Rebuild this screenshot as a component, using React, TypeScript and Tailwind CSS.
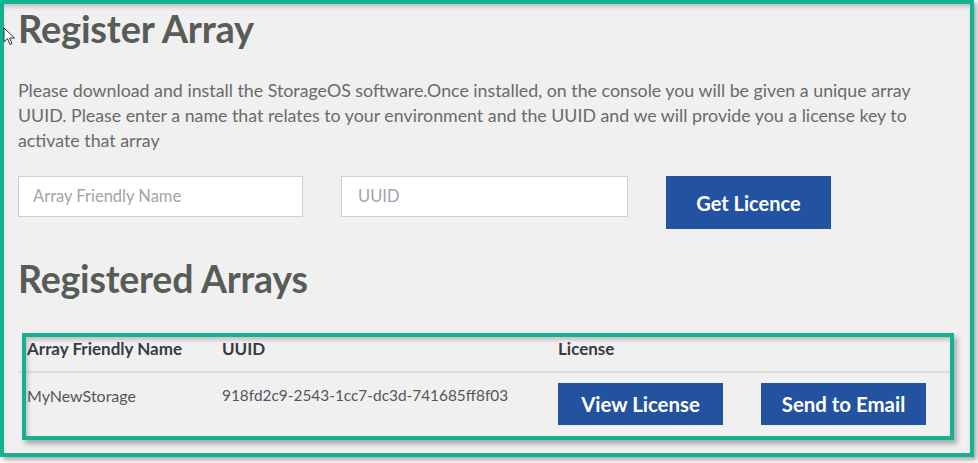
import React from "react";

const font = { fontFamily: "Lato, 'Open Sans', sans-serif" };

export default function App() {
  return (
    <div className="relative w-[978px] h-[463px] bg-white overflow-hidden" style={font}>
      <div className="w-[974px] h-[457px] box-border border-4 border-[#14b08f] bg-[#f0f0f0] shadow-[3px_3px_5px_rgba(0,0,0,0.35)]">
        <div className="shadow-[inset_0_4px_5px_-2px_rgba(0,0,0,0.25)] pl-[14px] pr-[20px] pt-[2px] h-full">
          <h1 className="text-[38px] leading-[44px] font-bold text-[#575c57] tracking-[-0.2px]">Register Array</h1>
          <p className="mt-[28px] text-[17.8px] leading-[25px] text-[#6a6a6a]">
            <span className="block whitespace-nowrap">Please download and install the StorageOS software.Once installed, on the console you will be given a unique array</span>
            <span className="block whitespace-nowrap">UUID. Please enter a name that relates to your environment and the UUID and we will provide you a license key to</span>
            <span className="block whitespace-nowrap">activate that array</span>
          </p>
          <div className="mt-[23px] flex items-start">
            <div className="w-[285px] h-[41px] bg-white border border-[#cfcfcf] flex items-center pl-[14px] text-[16.5px] text-[#a3a3ab]">Array Friendly Name</div>
            <div className="ml-[38px] w-[287px] h-[41px] bg-white border border-[#cfcfcf] flex items-center pl-[16px] text-[16.5px] text-[#a3a3ab]">UUID</div>
            <button className="ml-[38px] w-[165px] h-[53px] bg-[#2352a0] text-white font-bold text-[20px] flex items-center justify-center">Get Licence</button>
          </div>
          <h2 className="mt-[28px] text-[37.5px] leading-[44px] font-bold text-[#575c57] tracking-[-0.2px]">Registered Arrays</h2>
          <div className="mt-[30px]">
            <div className="flex items-center h-[42px] pb-[4px] border-b-2 border-[#dddddd] text-[17px] font-bold text-[#3a3a45]">
              <div className="w-[204px] pl-[9px]">Array Friendly Name</div>
              <div className="w-[336px]">UUID</div>
              <div>License</div>
            </div>
            <div className="flex items-start pt-[10px] text-[16px] text-[#55555c]">
              <div className="w-[204px] pl-[9px] pt-[1px] leading-[24px]">MyNewStorage</div>
              <div className="w-[336px] pt-[0px] leading-[24px] text-[15.4px]">918fd2c9-2543-1cc7-dc3d-741685ff8f03</div>
              <button className="w-[165px] h-[42px] bg-[#2352a0] text-white font-bold text-[20.4px] flex items-center justify-center">View License</button>
              <button className="ml-[38px] w-[165px] h-[42px] bg-[#2352a0] text-white font-bold text-[20.4px] flex items-center justify-center">Send to Email</button>
            </div>
          </div>
        </div>
      </div>
      <div className="absolute left-[22px] top-[333px] w-[932px] h-[107px] border-4 border-[#14b08f] shadow-[3px_4px_5px_rgba(0,0,0,0.3),inset_2px_3px_4px_rgba(0,0,0,0.2)] pointer-events-none"></div>
      <svg className="absolute left-[3px] top-[27px]" width="14" height="20" viewBox="0 0 14 20">
        <path d="M1 1 L1 15 L4.5 11.5 L7 17.5 L9 16.6 L6.6 11 L11.5 11 Z" fill="white" stroke="#333" strokeWidth="1" strokeLinejoin="round" />
      </svg>
    </div>
  );
}
